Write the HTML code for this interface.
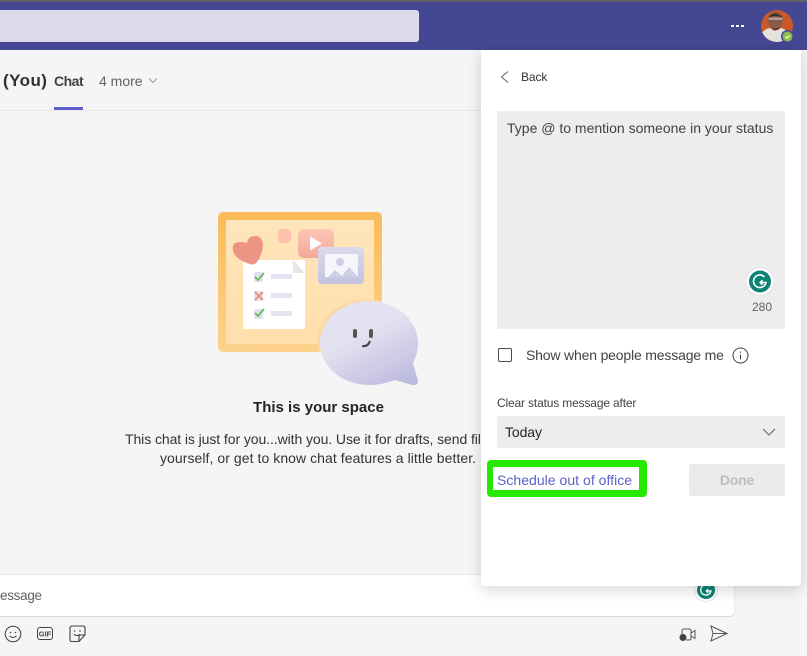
<!DOCTYPE html>
<html lang="en">
<head>
<meta charset="utf-8">
<title>Chat</title>
<style>
html,body{margin:0;padding:0;width:807px;height:656px;overflow:hidden;background:#f5f5f5;font-family:"Liberation Sans",sans-serif;color:#242424}
.a{position:absolute;white-space:nowrap}
svg{position:absolute;overflow:visible}
</style>
</head>
<body>
<!-- top bar -->
<div class="a" style="left:0;top:0;width:807px;height:50px;background:#444791"></div>
<div class="a" style="left:0;top:0;width:807px;height:2px;background:#5f5f66"></div>
<div class="a" style="left:0;top:10px;width:419px;height:32px;background:#dcdbe9;border-radius:0 3px 3px 0"></div>
<div class="a" style="left:731px;top:25px;width:3px;height:2px;background:#fff;box-shadow:5px 0 #fff,10px 0 #fff"></div>

<!-- avatar -->
<svg style="left:760px;top:10px" width="34" height="34" viewBox="0 0 34 34">
<defs><clipPath id="av"><circle cx="17" cy="16" r="16"/></clipPath></defs>
<g clip-path="url(#av)">
<rect width="34" height="34" fill="#c9582a"/>
<path d="M0 34V25Q4 19 10 18L15 21L21 18Q28 20 34 26V34Z" fill="#e4e1de"/>
<ellipse cx="15.500" cy="10.500" rx="7.500" ry="9" fill="#8a5a45"/>
<path d="M8 8Q15 -1 23 8Q15 4 8 8Z" fill="#3e2c26"/>
<rect x="8.500" y="7.500" width="14" height="2.500" fill="#b09a92"/>
<path d="M11 17Q15.500 20 20 17L18 20H13Z" fill="#5c3a2c"/>
</g>
<circle cx="27.500" cy="26.500" r="6.500" fill="#444791"/>
<circle cx="27.500" cy="26.500" r="5" fill="#8cbd4a"/>
<path d="M25.500 26.700l1.500 1.400 2.600-2.600" stroke="#fff" stroke-width="1.200" fill="none"/>
</svg>

<!-- header -->
<div class="a" style="left:3px;top:71px;font-size:17px;line-height:20px;font-weight:bold;color:#303030;letter-spacing:.45px">(You)</div>
<div class="a" style="left:54px;top:73px;font-size:14px;line-height:17px;font-weight:bold;color:#424242;letter-spacing:-.5px">Chat</div>
<div class="a" style="left:99px;top:73px;font-size:14px;line-height:17px;color:#616161">4 more</div>
<svg style="left:148px;top:77px" width="10" height="8" viewBox="0 0 10 8"><path d="M1 1.500l4 4 4-4" stroke="#9a9a9a" stroke-width="1" fill="none"/></svg>
<div class="a" style="left:54px;top:107px;width:29px;height:3px;background:#5b5fc7"></div>
<div class="a" style="left:0;top:110px;width:481px;height:1px;background:#e6e6e6"></div>

<!-- illustration -->
<svg style="left:200px;top:200px" width="230" height="200" viewBox="0 0 230 200">
<defs>
<linearGradient id="bd" x1="0" y1="0" x2="0" y2="1"><stop offset="0" stop-color="#fbbb58"/><stop offset="1" stop-color="#fdd28c"/></linearGradient>
<linearGradient id="bi" x1="0" y1="0" x2="0" y2="1"><stop offset="0" stop-color="#ffe5bb"/><stop offset="1" stop-color="#ffdfab"/></linearGradient>
<linearGradient id="bb" x1=".4" y1=".4" x2=".75" y2="1"><stop offset="0" stop-color="#e4e2f0"/><stop offset="1" stop-color="#bfbddf"/></linearGradient>
<linearGradient id="pc" x1="0" y1="0" x2="0" y2="1"><stop offset="0" stop-color="#dbdaec"/><stop offset="1" stop-color="#c4c3e0"/></linearGradient>
<linearGradient id="pl" x1="0" y1="0" x2="0" y2="1"><stop offset="0" stop-color="#fdc7b6"/><stop offset="1" stop-color="#f2a999"/></linearGradient>
<clipPath id="bc"><rect x="18" y="12" width="164" height="140" rx="5"/></clipPath>
</defs>
<rect x="18" y="12" width="164" height="140" rx="5" fill="url(#bd)"/>
<rect x="26" y="20" width="148" height="124" fill="url(#bi)"/>
<rect x="78" y="29" width="13" height="14" rx="4" fill="#fdc2ae"/>
<rect x="98" y="29" width="36" height="29" rx="6" fill="url(#pl)"/>
<path d="M110 36.500l12 7-12 7z" fill="#fff"/>
<rect x="118" y="47" width="46" height="37" rx="4" fill="url(#pc)"/>
<rect x="125" y="54" width="33" height="23" fill="#f5f5fc"/>
<circle cx="140" cy="62" r="4" fill="#cfcee6"/>
<path d="M128 77l7-7 7 6 7-9 9 10z" fill="#cfcee6"/>
<rect x="43" y="60" width="62" height="69" fill="#fff"/>
<path d="M93 60l12 13H93z" fill="#e6e6e6"/>
<path d="M50 64Q36 60 33 51Q31 42 40 42Q45 42 47 43Q48 36 56 36Q63 37 63 46Q62 55 57 62Q54 66 50 64Z" fill="#ec9584"/>
<rect x="54" y="72" width="9" height="10" rx="2" fill="#e2e1ef"/>
<rect x="54" y="91" width="9" height="10" rx="2" fill="#e2e1ef"/>
<rect x="54" y="109" width="9" height="10" rx="2" fill="#e2e1ef"/>
<path d="M55 77l3 3 6-7M55 113l3 3 6-7" stroke="#6cbb5c" stroke-width="1.800" fill="none"/>
<path d="M55 92l8 8M63 92l-8 8" stroke="#ec8a78" stroke-width="1.800"/>
<rect x="71" y="74" width="21" height="5" fill="#e5e4f2"/>
<rect x="71" y="93" width="21" height="5" fill="#e5e4f2"/>
<rect x="71" y="111" width="21" height="5" fill="#e5e4f2"/>
<ellipse cx="168" cy="143" rx="51.500" ry="43.500" fill="#fbd8a0" clip-path="url(#bc)"/>
<path d="M169 101C196 101 218 120 218 143C218 150 216 157 213 163L218 181Q218 186 212 185L195 180C187 183 178 185 169 185C142 185 120 166 120 143C120 120 142 101 169 101Z" fill="url(#bb)"/>
<rect x="153" y="129" width="4" height="9" rx="2" fill="#555"/>
<rect x="169" y="129" width="4" height="9" rx="2" fill="#555"/>
<path d="M162 146Q168 147 170 141" stroke="#444" stroke-width="2" fill="none"/>
</svg>

<div class="a" style="left:253px;top:398px;width:131px;text-align:center;font-size:15px;line-height:20px;font-weight:bold;color:#242424">This is your space</div>
<div class="a" style="left:125px;top:430px;font-size:14px;line-height:19px;color:#333;letter-spacing:-.08px">This chat is just for you...with you. Use it for drafts, send fil</div>
<div class="a" style="left:160px;top:449px;font-size:14px;line-height:19px;color:#333;letter-spacing:.06px">yourself, or get to know chat features a little better.</div>

<!-- compose -->
<div class="a" style="left:-4px;top:575px;width:738px;height:41px;background:#fff;border-radius:4px;box-shadow:0 -1px 0 #e8e8e8,0 1px 0 #d6d6d6,1px 0 0 #e8e8e8"></div>
<div class="a" style="left:0;top:587px;font-size:13.500px;line-height:17px;color:#616161;letter-spacing:-.3px">essage</div>

<svg style="left:4px;top:625px" width="18" height="18" viewBox="0 0 18 18" fill="none" stroke="#424242"><circle cx="9" cy="9" r="7.800"/><circle cx="6.500" cy="7.500" r=".8" fill="#424242" stroke="none"/><circle cx="11.500" cy="7.500" r=".8" fill="#424242" stroke="none"/><path d="M5.500 11Q9 14 12.500 11"/></svg>
<svg style="left:37px;top:626px" width="16" height="15" viewBox="0 0 16 15"><rect x=".5" y="1.500" width="15" height="12" rx="2.500" fill="none" stroke="#424242"/><text x="8" y="10.500" text-anchor="middle" font-family="Liberation Sans" font-size="7.500" font-weight="bold" fill="#424242">GIF</text></svg>
<svg style="left:69px;top:625px" width="17" height="18" viewBox="0 0 17 18" fill="none" stroke="#424242" stroke-width="1.100"><path d="M3 1h11q2 0 2 2v7l-6 6.500H3q-2 0-2-2V3q0-2 2-2z"/><path d="M16 10h-4q-2 0-2 2v4.500"/><circle cx="5.500" cy="6" r=".8" fill="#424242" stroke="none"/><circle cx="11" cy="6" r=".8" fill="#424242" stroke="none"/><path d="M5 9.500q3 2 6 0"/></svg>
<svg style="left:679px;top:627px" width="18" height="15" viewBox="0 0 18 15"><path d="M3 9V4q0-2 2-2h5q2 0 2 2v7q0 2-2 2H7" fill="none" stroke="#555"/><path d="M12 6l4-2.500v8L12 9" fill="none" stroke="#555"/><circle cx="4" cy="10.500" r="3.500" fill="#424242"/></svg>
<svg style="left:710px;top:625px" width="18" height="17" viewBox="0 0 18 17"><path d="M1 1l16 7.500L1 16l2-7.500z M3 8.500h14" fill="none" stroke="#555"/></svg>

<!-- Grammarly behind panel -->
<svg style="left:694px;top:578px" width="24" height="24" viewBox="0 0 24 24"><circle cx="12" cy="12" r="11.500" fill="#fff" stroke="#e4e4ee"/><circle cx="12" cy="12" r="9" fill="#0a8276"/><path d="M15.700 8.300A5.200 5.200 0 1 0 17 13H12.500M14.200 11.200L12.300 13L14.200 14.800" stroke="#fff" stroke-width="1.400" fill="none"/></svg>

<!-- panel -->
<div class="a" style="left:481px;top:50px;width:320px;height:536px;background:#fff;border-radius:0 0 4px 4px;box-shadow:0 4px 14px rgba(0,0,0,.16)"></div>
<svg style="left:499px;top:70px" width="12" height="14" viewBox="0 0 12 14"><path d="M9 1.500L2.500 7 9 12.500" stroke="#616161" fill="none"/></svg>
<div class="a" style="left:521px;top:70px;font-size:12px;line-height:15px;color:#333;letter-spacing:-.1px">Back</div>

<div class="a" style="left:497px;top:111px;width:288px;height:218px;background:#ededed;border-radius:2px"></div>
<div class="a" style="left:507px;top:120px;font-size:14px;line-height:17px;color:#424242;letter-spacing:0">Type @ to mention someone in your status</div>
<svg style="left:746px;top:267px" width="28" height="28" viewBox="0 0 28 28"><circle cx="14" cy="14.500" r="14" fill="#fff" stroke="#e2e2ec"/><circle cx="14" cy="14.500" r="11" fill="#0a8276"/><path d="M18.500 10A6.300 6.300 0 1 0 20 15.500H14.500M16.500 13.200L14.200 15.500L16.500 17.800" stroke="#fff" stroke-width="1.600" fill="none"/></svg>
<div class="a" style="left:752px;top:300px;font-size:12px;line-height:14px;color:#616161">280</div>

<div class="a" style="left:498px;top:348px;width:12px;height:12px;border:1px solid #4a4a4a;border-radius:2px;background:#fff"></div>
<div class="a" style="left:526px;top:347px;font-size:14px;line-height:17px;color:#424242;letter-spacing:-.17px">Show when people message me</div>
<svg style="left:732px;top:347px" width="17" height="17" viewBox="0 0 17 17"><circle cx="8.500" cy="8.500" r="7.500" fill="none" stroke="#424242"/><rect x="8" y="7.500" width="1" height="5" fill="#424242"/><rect x="8" y="4.500" width="1" height="1.300" fill="#424242"/></svg>

<div class="a" style="left:497px;top:396px;font-size:12px;line-height:15px;color:#424242;letter-spacing:-.16px">Clear status message after</div>
<div class="a" style="left:497px;top:416px;width:288px;height:32px;background:#ededed;border-radius:3px"></div>
<div class="a" style="left:505px;top:424px;font-size:14px;line-height:17px;color:#242424;letter-spacing:-.1px">Today</div>
<svg style="left:762px;top:428px" width="14" height="9" viewBox="0 0 14 9"><path d="M1 1l6 6 6-6" stroke="#616161" fill="none"/></svg>

<div class="a" style="left:487px;top:460px;width:146px;height:23px;border-style:solid;border-color:#27e800;border-width:7px 8px 7px 6px;border-radius:4px;background:#fff"></div>
<div class="a" style="left:497px;top:472px;font-size:14px;line-height:17px;color:#5b5fc7;letter-spacing:.03px">Schedule out of office</div>
<div class="a" style="left:689px;top:464px;width:96px;height:32px;background:#ebebeb;border-radius:3px;text-align:center;font-size:14px;line-height:32px;font-weight:bold;color:#bdbdbd;letter-spacing:-.2px">Done</div>
</body>
</html>
